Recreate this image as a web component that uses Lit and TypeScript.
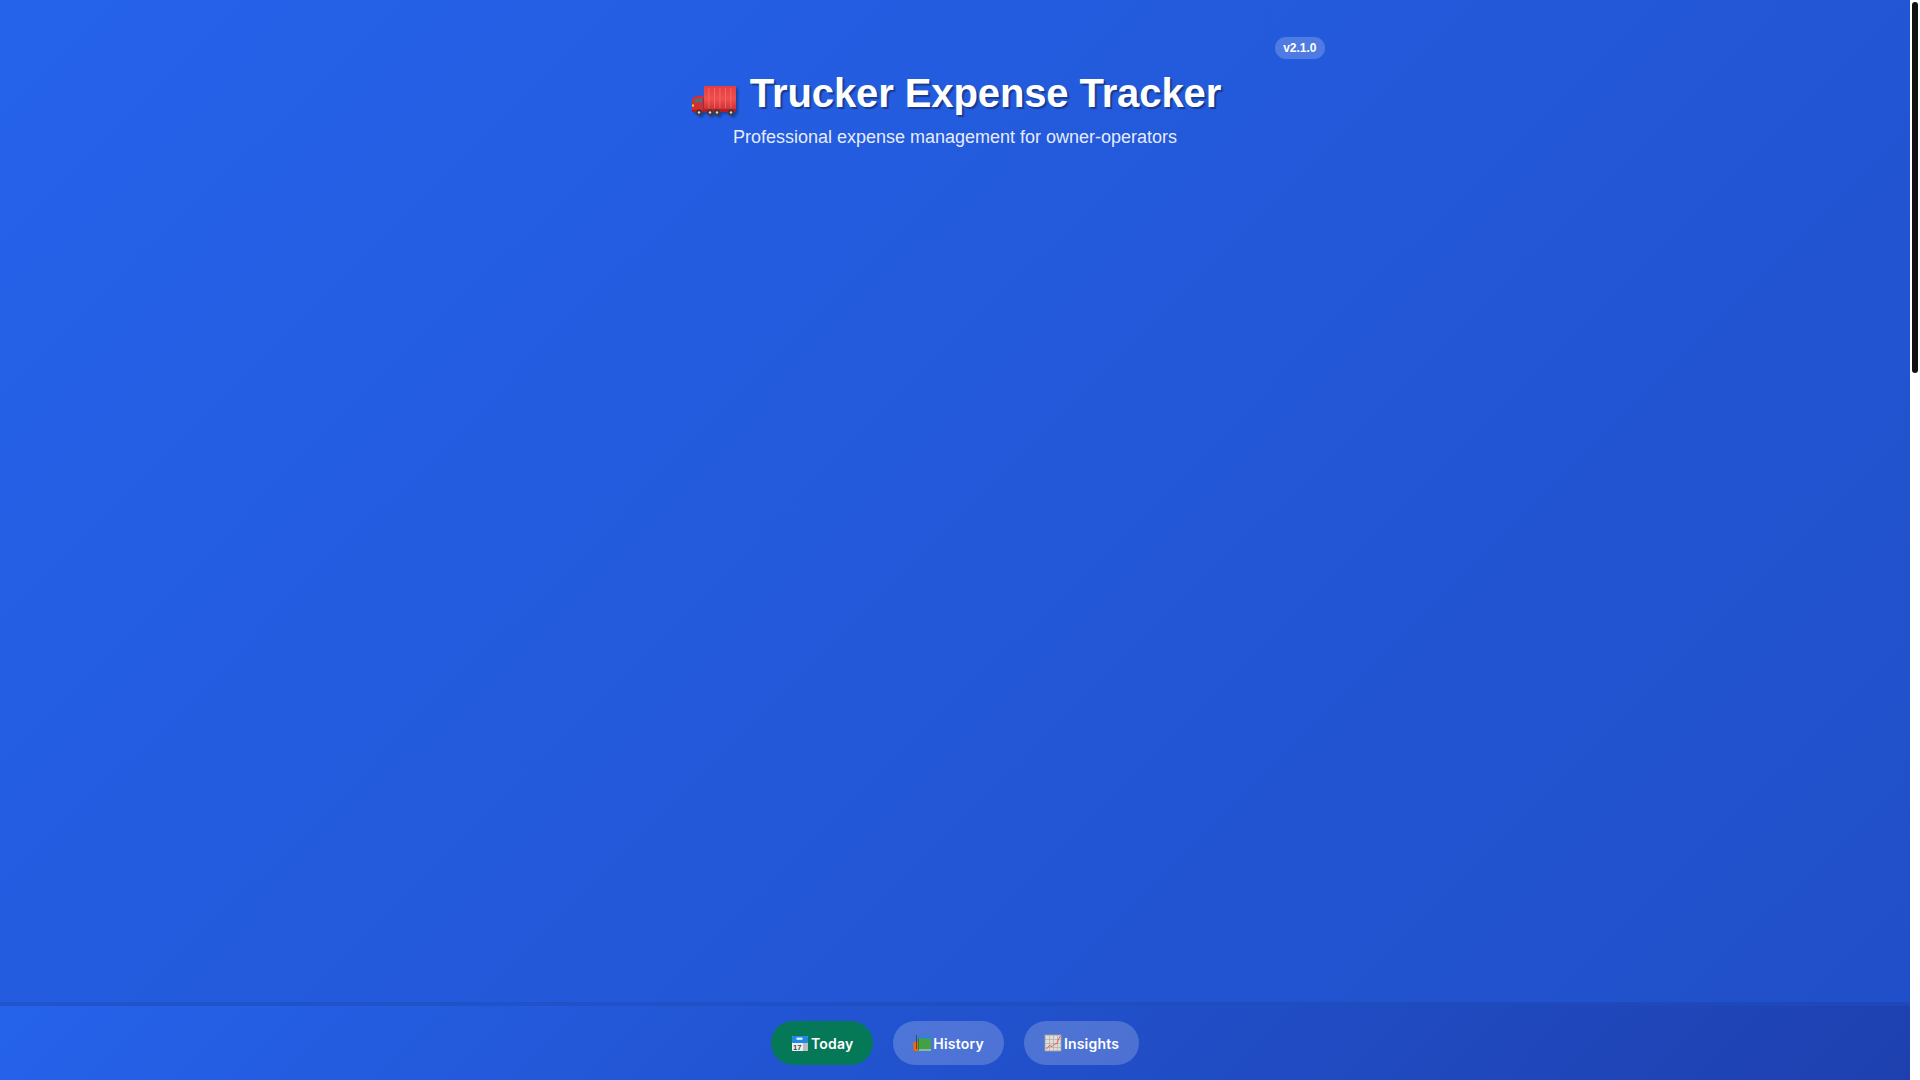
import { LitElement, html, css } from "lit";
import { customElement } from "lit/decorators.js";

const truck = html`<svg class="truck" viewBox="0 0 50 34" aria-hidden="true">
  <defs>
    <linearGradient id="cargo" x1="0" y1="0" x2="0" y2="1">
      <stop offset="0" stop-color="#e53e3e"/>
      <stop offset="0.55" stop-color="#ef4f4f"/>
      <stop offset="1" stop-color="#d32f2f"/>
    </linearGradient>
  </defs>
  <rect x="15" y="1" width="32" height="23.5" rx="1" fill="url(#cargo)"/>
  <g fill="#f07070">
    <rect x="19.5" y="3" width="0.8" height="20"/>
    <rect x="25" y="3" width="0.8" height="20"/>
    <rect x="30.5" y="3" width="0.8" height="20"/>
    <rect x="36" y="3" width="0.8" height="20"/>
    <rect x="41.5" y="3" width="0.8" height="20"/>
  </g>
  <path d="M3 26.5 V16 Q3 12 6 11.5 L14.5 10.5 V26.5 Z" fill="#d32f2f"/>
  <path d="M5 17.5 L6.5 14 L13 13 V17.5 Z" fill="#546e7a"/>
  <rect x="3" y="19.5" width="2" height="2" fill="#fdd835"/>
  <rect x="3" y="24.5" width="44" height="2.5" fill="#b71c1c"/>
  <g fill="#4e342e">
    <circle cx="10" cy="27.5" r="3"/>
    <circle cx="21" cy="27.5" r="3"/>
    <circle cx="28" cy="27.5" r="3"/>
    <circle cx="42" cy="27.5" r="3"/>
  </g>
  <g fill="#cfd8dc">
    <circle cx="10" cy="27.5" r="1.2"/>
    <circle cx="21" cy="27.5" r="1.2"/>
    <circle cx="28" cy="27.5" r="1.2"/>
    <circle cx="42" cy="27.5" r="1.2"/>
  </g>
</svg>`;

const calendar = html`<svg class="ico" viewBox="0 0 18 18" aria-hidden="true">
  <rect x="1" y="2" width="16" height="15" rx="0.8" fill="#eceff1"/>
  <rect x="12" y="9" width="5" height="8" fill="#bdbdbd"/>
  <rect x="1" y="2" width="16" height="7" rx="0.8" fill="#1e88e5"/>
  <rect x="5.5" y="3.6" width="6" height="2.2" fill="#e3f2fd"/>
  <text x="2" y="16" font-family="Liberation Sans, sans-serif" font-size="7.5" font-weight="700" fill="#37474f">17</text>
</svg>`;

const books = html`<svg class="ico" viewBox="0 0 18 18" aria-hidden="true">
  <rect x="4" y="3" width="14" height="3" fill="#1e88e5"/>
  <rect x="0.5" y="8" width="5" height="9" fill="#ef6c00"/>
  <rect x="3" y="1" width="1" height="14" fill="#5d4037"/>
  <rect x="5" y="4.5" width="13" height="12" fill="#43a047"/>
  <rect x="5" y="15.5" width="13" height="1" fill="#cfd8dc"/>
  <rect x="5" y="4.5" width="1" height="12" fill="#2e7d32"/>
</svg>`;

const chart = html`<svg class="ico" viewBox="0 0 18 18" aria-hidden="true">
  <rect x="1" y="1" width="16" height="16" fill="#e0dcd8" stroke="#a0a0a0" stroke-width="0.8"/>
  <path d="M1 5.5H17M1 9.5H17M1 13.5H17M5.5 1V17M9.5 1V17M13.5 1V17" stroke="#a8a8a8" stroke-width="0.6" fill="none"/>
  <path d="M2.5 15 L5.5 11.5 L8 12.5 L10.5 10 L13 9.5 L14.5 5 L16.5 2" stroke="#ef5350" stroke-width="1" fill="none"/>
</svg>`;

@customElement("app-root")
export class AppRoot extends LitElement {
  static styles = css`
    :host {
      display: flex;
      height: 100vh;
      overflow: hidden;
      background: #fff;
      font-family: "Liberation Sans", Arial, sans-serif;
    }
    .main {
      flex: 1;
      min-width: 0;
      display: flex;
      flex-direction: column;
      background: linear-gradient(135deg, #2563eb 0%, #1e40af 100%) no-repeat;
      background-size: 100% 3110px;
    }
    .gutter {
      flex: 0 0 10px;
      box-sizing: border-box;
      padding: 2px;
    }
    .thumb {
      height: 371px;
      border-radius: 3px;
      background: #111;
    }
    .content {
      flex: 1;
      padding-top: 30px;
    }
    .header {
      position: relative;
      width: 740px;
      margin: 0 auto;
      text-align: center;
      color: #fff;
    }
    .badge {
      position: absolute;
      right: 0;
      top: 7px;
      height: 22px;
      line-height: 22px;
      padding: 0 8.5px;
      border-radius: 11px;
      background: rgba(255, 255, 255, 0.2);
      font-size: 12px;
      font-weight: 700;
    }
    h1 {
      margin: 0;
      padding-top: 40px;
      font-size: 40px;
      line-height: 46px;
      font-weight: 700;
      letter-spacing: -0.1px;
      text-shadow: 2px 2px 1px rgba(0, 0, 0, 0.35);
    }
    .truck {
      width: 50px;
      height: 34px;
      vertical-align: -12px;
      filter: drop-shadow(2px 2px 1px rgba(0, 0, 0, 0.3));
    }
    .sub {
      margin: 8px 0 0;
      font-size: 18px;
      line-height: 21px;
      color: rgba(255, 255, 255, 0.9);
    }
    nav {
      display: flex;
      justify-content: center;
      gap: 20px;
      padding: 15px;
      border-top: 4px solid rgba(0, 0, 0, 0.08);
      background: linear-gradient(135deg, #2563eb 0%, #1e40af 100%);
      background-clip: padding-box;
    }
    button {
      display: flex;
      align-items: center;
      gap: 2px;
      height: 44px;
      padding: 0 20px;
      border: none;
      border-radius: 25px;
      background: rgba(255, 255, 255, 0.2);
      color: #fff;
      font-family: Inter, "Liberation Sans", sans-serif;
      font-size: 14px;
      font-weight: 600;
      letter-spacing: 0.2px;
      white-space: nowrap;
    }
    button.active { background: #047857; }
    .ico { width: 18px; height: 18px; flex: none; }
  `;

  render() {
    return html`
      <div class="main">
        <div class="content">
          <header class="header">
            <span class="badge">v2.1.0</span>
            <h1>${truck} Trucker Expense Tracker</h1>
            <p class="sub">Professional expense management for owner-operators</p>
          </header>
        </div>
        <nav>
          <button class="active">${calendar}Today</button>
          <button>${books}History</button>
          <button>${chart}Insights</button>
        </nav>
      </div>
      <div class="gutter"><div class="thumb"></div></div>
    `;
  }
}
